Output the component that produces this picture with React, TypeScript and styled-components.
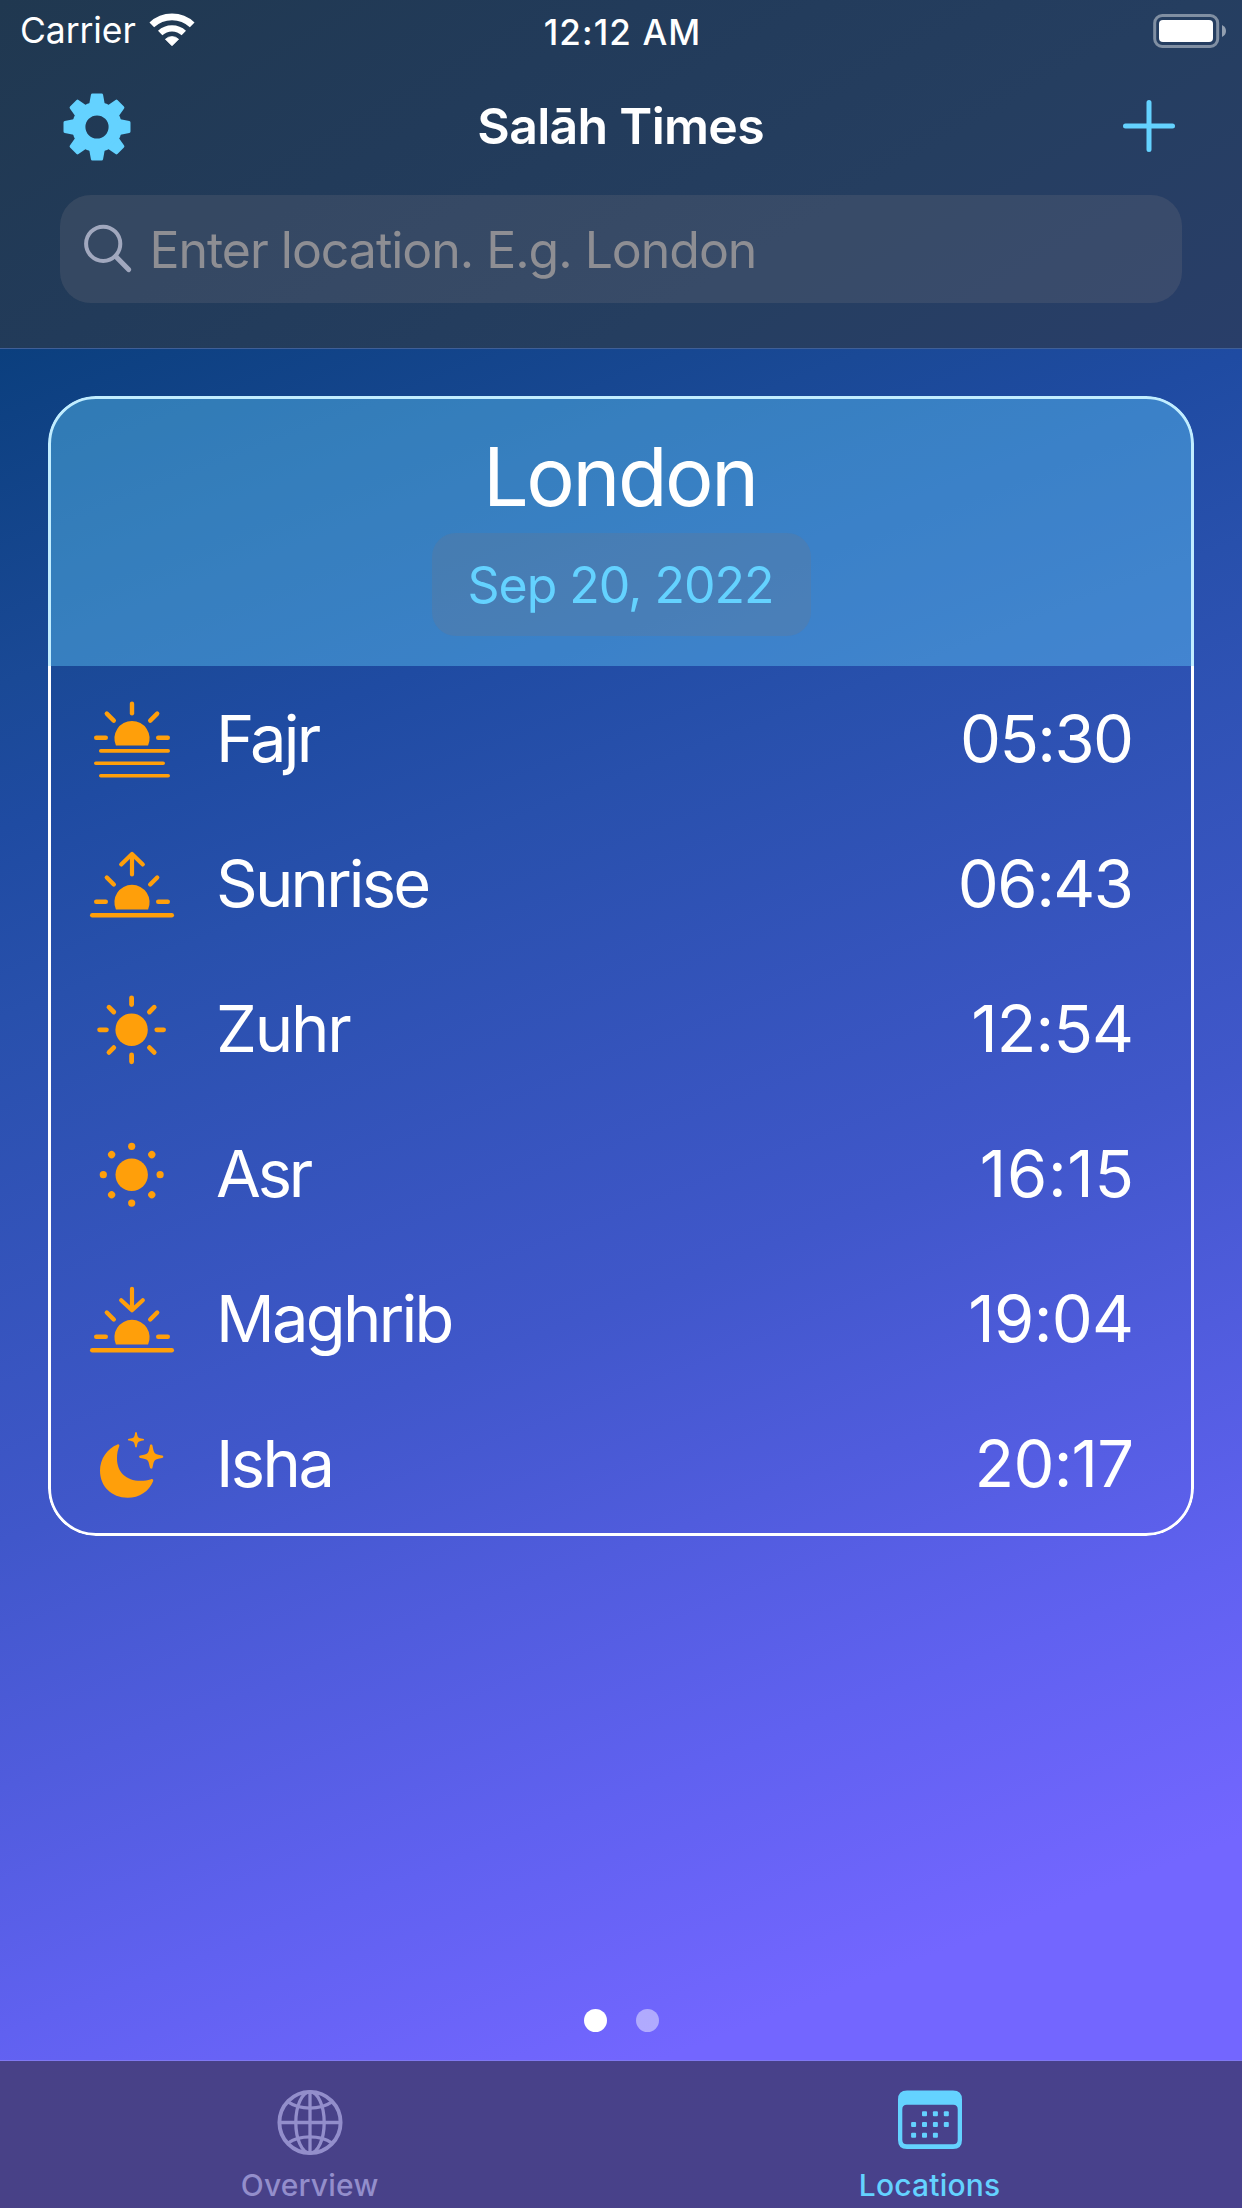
import React from 'react';
import styled, { createGlobalStyle } from 'styled-components';

const CYAN = '#64d2ff';
const ORANGE = '#ff9f0a';

const GlobalStyle = createGlobalStyle`
  * { box-sizing: border-box; }
  body { margin: 0; }
`;

const Screen = styled.div`
  width: 1242px;
  height: 2208px;
  display: flex;
  flex-direction: column;
  overflow: hidden;
  color: #fff;
  font-family: Inter, 'Liberation Sans', sans-serif;
  background: linear-gradient(
    159deg,
    #00386a 0px,
    #0b3f7e 326px,
    #1a4996 640px,
    #1f4ba2 775px,
    #2850ac 950px,
    #4057ca 1440px,
    #6061f0 1900px,
    #7366ff 2160px
  );
`;

const Header = styled.header`
  height: 349px;
  flex: none;
  border-bottom: 1px solid #3f5f98;
  background: linear-gradient(150deg, #203850 0%, #223b5a 35%, #253e60 65%, #293e69 100%);
`;

const StatusBar = styled.div`
  height: 62px;
  display: grid;
  grid-template-columns: 1fr auto 1fr;
  align-items: center;
  padding: 1px 15px 0 20px;
  svg { display: block; }
`;

const StatusLeft = styled.div`
  display: flex;
  align-items: center;
  gap: 13px;
  svg { margin-bottom: 3px; }
`;

const StatusRight = styled.div`
  display: flex;
  justify-content: flex-end;
  padding-bottom: 2px;
`;

const Label = styled.span<{ $size: number; $weight?: number; $spacing?: number; $color?: string }>`
  font-size: ${p => p.$size}px;
  font-weight: ${p => p.$weight ?? 400};
  letter-spacing: ${p => p.$spacing ?? 0}px;
  margin-right: ${p => -(p.$spacing ?? 0)}px;
  color: ${p => p.$color ?? 'inherit'};
  line-height: 1.2;
  white-space: nowrap;
`;

const ClockLabel = styled(Label)`
  padding-right: 3px;
`;

const NavBar = styled.div`
  height: 133px;
  display: grid;
  grid-template-columns: 1fr auto 1fr;
  align-items: center;
  padding: 0 62px 5px 62px;
  svg { display: block; }
`;

const NavEnd = styled.div`
  display: flex;
  justify-content: flex-end;
  padding-right: 2px;
`;

const SearchField = styled.div`
  height: 108px;
  margin: 0 60px;
  padding: 2px 0 0 20px;
  border-radius: 31px;
  display: flex;
  align-items: center;
  gap: 15.5px;
  background: rgba(118, 118, 128, 0.24);
`;

const Main = styled.main`
  flex: 1;
  display: flex;
  flex-direction: column;
  justify-content: space-between;
  align-items: center;
  padding: 47px 48px 28px;
`;

const Card = styled.section`
  position: relative;
  width: 1146px;
  height: 1140px;
  border-radius: 48px;
  overflow: hidden;
  &::before {
    content: '';
    position: absolute;
    inset: 0;
    border: 3px solid #fff;
    border-radius: 48px;
  }
`;

const CardHeader = styled.div`
  position: relative;
  height: 270px;
  display: flex;
  flex-direction: column;
  align-items: center;
  padding-top: 33px;
  background: rgba(100, 210, 255, 0.4);
`;

const DatePill = styled.div`
  width: 379px;
  height: 103px;
  margin-top: 7px;
  border-radius: 24px;
  display: flex;
  align-items: center;
  justify-content: center;
  background: rgba(118, 118, 128, 0.24);
`;

const Row = styled.div`
  height: 145px;
  display: grid;
  grid-template-columns: 90px 1fr auto;
  column-gap: 39px;
  align-items: center;
  padding: 0 60px 0 39px;
`;

const IconSvg = styled.svg`
  display: block;
  width: 90px;
  height: 96px;
  fill: ${ORANGE};
  stroke: ${ORANGE};
  stroke-width: 0;
  stroke-linecap: round;
  stroke-linejoin: round;
`;

const Dots = styled.div`
  display: flex;
  gap: 29px;
`;

const Dot = styled.i<{ $on?: boolean }>`
  width: 23px;
  height: 23px;
  border-radius: 50%;
  background: ${p => (p.$on ? '#fff' : 'rgba(255,255,255,0.45)')};
`;

const TabBar = styled.nav`
  height: 148px;
  flex: none;
  display: grid;
  grid-template-columns: 1fr 1fr;
  padding-right: 2px;
  border-top: 1px solid #8078f2;
  background: linear-gradient(100deg, #484187, #48418c);
`;

const Tab = styled.div`
  display: flex;
  flex-direction: column;
  align-items: center;
  padding: 26px 1px 0 0;
  svg { display: block; }
`;

const TabLabel = styled(Label)`
  margin-top: 10px;
`;

/* Drawings share a frame whose origin is the icon column's centre. */
const Frame = ({ children }: { children: React.ReactNode }) => (
  <IconSvg viewBox="-45 -48 90 96">{children}</IconSvg>
);

const SunHalf = ({ y }: { y: number }) => (
  <g transform={`translate(0 ${y})`}>
    <path d="M-16.1 7.8 A17.6 17.6 0 1 1 16.1 7.8 Z" />
    <path
      d="M-35.8 0h9.6M26.2 0h9.6M-25.2 -24.2l7 7M25.2 -24.2l-7 7"
      strokeWidth="4.4"
    />
  </g>
);

const FajrIcon = () => (
  <Frame>
    <SunHalf y={-1.2} />
    <path d="M0 -35.2v9.4" strokeWidth="4.4" />
    <path d="M-31.2 11.9h67.4M-36.2 24.3h67.4M-31.2 36.7h67.4" strokeWidth="3.6" />
  </Frame>
);

const HorizonIcon = ({ rising }: { rising?: boolean }) => (
  <Frame>
    <SunHalf y={17.7} />
    <path
      d={rising ? 'M0 -9.6v-20.4M-10.8 -19.6L0 -30L10.8 -19.6' : 'M0 -30.2v21.4M-10.8 -18.8L0 -8.8L10.8 -18.8'}
      fill="none"
      strokeWidth="4.2"
    />
    <path d="M-39.8 31.3h79.6" strokeWidth="4.4" />
  </Frame>
);

const ANGLES = [0, 45, 90, 135, 180, 225, 270, 315];

const ZuhrIcon = () => (
  <Frame>
    <g transform="translate(-0.4 0.8)">
      <circle r="16.2" />
      {ANGLES.map(a => (
        <path key={a} d="M0 -32v6.8" strokeWidth="4.8" transform={`rotate(${a})`} />
      ))}
    </g>
  </Frame>
);

const AsrIcon = () => (
  <Frame>
    <g transform="translate(-0.3 0.7)">
      <circle r="16.2" />
      {ANGLES.map(a => (
        <circle key={a} cy="-28.4" r="3.6" transform={`rotate(${a})`} />
      ))}
    </g>
  </Frame>
);

const IshaIcon = () => (
  <Frame>
    <path d="M-14.5 -19.6C-13.3 -20.1 -12.3 -19.2 -12.7 -17.9C-14.2 -14 -15 -10.5 -15 -5.5C-15 8 -6 16.8 8.5 16.8C12.5 16.8 15.5 16.2 19 15.2C20.7 14.7 21.6 15.8 21.1 17.2C17.2 27.3 7.2 33.8 -4.4 33.8C-20.5 33.8 -32 22.6 -32 6.6C-32 -5 -24.8 -15.6 -14.5 -19.6Z" />
    <path d="M4 -32C4.6 -32 4.8 -31.7 4.9 -31.1C5.8 -26.2 6.1 -26 11 -25.2C11.8 -25 12 -24.8 12 -24.3C12 -23.8 11.8 -23.6 11 -23.5C6.1 -22.6 5.8 -22.4 4.9 -17.5C4.8 -16.8 4.6 -16.6 4 -16.6C3.4 -16.6 3.2 -16.8 3.1 -17.5C2.2 -22.4 1.9 -22.6 -3 -23.5C-3.8 -23.6 -4 -23.8 -4 -24.3C-4 -24.8 -3.8 -25 -3 -25.2C1.9 -26 2.2 -26.2 3.1 -31.1C3.2 -31.7 3.4 -32 4 -32Z" />
    <path d="M19.2 -19.4C20 -19.4 20.4 -19 20.5 -18.2C22.2 -9.8 22.2 -9.8 30.1 -8.5C30.9 -8.4 31.3 -8 31.3 -7.3C31.3 -6.6 30.9 -6.2 30.1 -6.1C22.2 -4.8 22.2 -4.8 20.5 3.6C20.4 4.4 20 4.8 19.2 4.8C18.4 4.8 18 4.4 17.9 3.6C16.2 -4.8 16.2 -4.8 8.3 -6.1C7.5 -6.2 7.1 -6.6 7.1 -7.3C7.1 -8 7.5 -8.4 8.3 -8.5C16.2 -9.8 16.2 -9.8 17.9 -18.2C18 -19 18.4 -19.4 19.2 -19.4Z" />
  </Frame>
);

const WifiIcon = () => (
  <svg width="46" height="34" viewBox="0 0 46 34" fill="#fff">
    <path d="M23 32.8L16.4 26.2A9.6 9.6 0 0 1 29.6 26.2Z" stroke="#fff" strokeWidth="0.8" strokeLinejoin="round" />
    <path d="M11.2 20A17.3 17.3 0 0 1 34.8 20" fill="none" stroke="#fff" strokeWidth="6.4" />
    <path d="M2.8 11.9A29.4 29.4 0 0 1 43.2 11.9" fill="none" stroke="#fff" strokeWidth="6.8" />
  </svg>
);

const BatteryIcon = () => (
  <svg width="74" height="34" viewBox="0 0 74 34">
    <rect x="1.7" y="1.5" width="63" height="31" rx="7.5" fill="none" stroke="#fff" strokeOpacity="0.42" strokeWidth="3" />
    <rect x="6" y="6" width="54" height="22" rx="4" fill="#fff" />
    <path d="M69 11V23C71.8 21.6 73 19.6 73 17C73 14.4 71.8 12.4 69 11Z" fill="#fff" fillOpacity="0.5" />
  </svg>
);

const GearIcon = () => (
  <svg width="70" height="70" viewBox="-35 -36 70 70" fill={CYAN}>
    <circle r="18.3" fill="none" stroke={CYAN} strokeWidth="13.4" />
    {ANGLES.map(a => (
      <path
        key={a}
        d="M-4.6 -32L4.6 -32L6.4 -22L-6.4 -22Z"
        stroke={CYAN}
        strokeWidth="3"
        strokeLinejoin="round"
        transform={`rotate(${a})`}
      />
    ))}
  </svg>
);

const PlusIcon = () => (
  <svg width="58" height="58" viewBox="-29 -29 58 58" stroke={CYAN} strokeWidth="5" strokeLinecap="round">
    <path d="M-23.5 0H23.5M0 -23.5V23.5" />
  </svg>
);

const SearchIcon = () => (
  <svg width="54" height="54" viewBox="0 0 54 54" fill="none" stroke="#a1a8be" strokeLinecap="round">
    <circle cx="23.2" cy="20.8" r="17.1" strokeWidth="4" />
    <path d="M35.8 33.4L48.6 46.6" strokeWidth="5" />
  </svg>
);

const GlobeIcon = () => (
  <svg width="70" height="70" viewBox="-35 -35.5 70 70" fill="none" stroke="#938ecb" strokeWidth="3.3">
    <circle r="30.6" strokeWidth="3.9" />
    <ellipse rx="14.2" ry="30.6" />
    <path d="M0 -30.6V30.6M-30.6 0H30.6" />
    <path d="M-22 -20.6C-10 -12.4 10 -12.4 22 -20.6M-22 20.6C-10 12.4 10 12.4 22 20.6" />
  </svg>
);

const CALENDAR_DOTS = [
  [1, 0], [2, 0], [3, 0],
  [0, 1], [1, 1], [2, 1], [3, 1],
  [0, 2], [1, 2], [2, 2],
];

const CalendarIcon = () => (
  <svg width="70" height="70" viewBox="-35 -35.5 70 70" fill={CYAN}>
    <path
      fillRule="evenodd"
      d="M-23 -32H23Q32 -32 32 -23V17.4Q32 26.4 23 26.4H-23Q-32 26.4 -32 17.4V-23Q-32 -32 -23 -32ZM-23.2 -17.8Q-27.7 -17.8 -27.7 -13.3V17.2Q-27.7 21.7 -23.2 21.7H23.2Q27.7 21.7 27.7 17.2V-13.3Q27.7 -17.8 23.2 -17.8Z"
    />
    {CALENDAR_DOTS.map(([c, r]) => (
      <rect key={`${c}-${r}`} x={-18.9 + c * 10.9} y={-11.2 + r * 10.7} width="5" height="5" rx="1" />
    ))}
  </svg>
);

const PRAYERS = [
  { name: 'Fajr', time: '05:30', icon: <FajrIcon />, nameSpacing: -2.8, timeSpacing: -1.6 },
  { name: 'Sunrise', time: '06:43', icon: <HorizonIcon rising />, nameSpacing: -2.8, timeSpacing: -1.5 },
  { name: 'Zuhr', time: '12:54', icon: <ZuhrIcon />, nameSpacing: -2.2, timeSpacing: -0.9 },
  { name: 'Asr', time: '16:15', icon: <AsrIcon />, nameSpacing: -3.2, timeSpacing: 0.7 },
  { name: 'Maghrib', time: '19:04', icon: <HorizonIcon />, nameSpacing: -2.7, timeSpacing: -0.7 },
  { name: 'Isha', time: '20:17', icon: <IshaIcon />, nameSpacing: -2.6, timeSpacing: -0.8 },
];

export default function App() {
  return (
    <Screen>
      <GlobalStyle />
      <Header>
        <StatusBar>
          <StatusLeft>
            <Label $size={35.5} $spacing={-0.1}>Carrier</Label>
            <WifiIcon />
          </StatusLeft>
          <ClockLabel $size={35} $weight={500} $spacing={1.1}>12:12 AM</ClockLabel>
          <StatusRight>
            <BatteryIcon />
          </StatusRight>
        </StatusBar>
        <NavBar>
          <GearIcon />
          <Label $size={50} $weight={600} $spacing={-0.7}>Salāh Times</Label>
          <NavEnd>
            <PlusIcon />
          </NavEnd>
        </NavBar>
        <SearchField>
          <SearchIcon />
          <Label $size={50} $color="#8e8e93" $spacing={-1.03}>Enter location. E.g. London</Label>
        </SearchField>
      </Header>
      <Main>
        <Card>
          <CardHeader>
            <Label $size={81} $spacing={-2.4}>London</Label>
            <DatePill>
              <Label $size={50} $color={CYAN} $spacing={-1}>Sep 20, 2022</Label>
            </DatePill>
          </CardHeader>
          {PRAYERS.map(p => (
            <Row key={p.name}>
              {p.icon}
              <Label $size={65} $spacing={p.nameSpacing}>{p.name}</Label>
              <Label $size={65} $spacing={p.timeSpacing}>{p.time}</Label>
            </Row>
          ))}
        </Card>
        <Dots>
          <Dot $on />
          <Dot />
        </Dots>
      </Main>
      <TabBar>
        <Tab>
          <GlobeIcon />
          <TabLabel $size={30} $weight={500} $color="#938ecb" $spacing={0.2}>Overview</TabLabel>
        </Tab>
        <Tab>
          <CalendarIcon />
          <TabLabel $size={30} $weight={500} $color={CYAN} $spacing={0.2}>Locations</TabLabel>
        </Tab>
      </TabBar>
    </Screen>
  );
}
